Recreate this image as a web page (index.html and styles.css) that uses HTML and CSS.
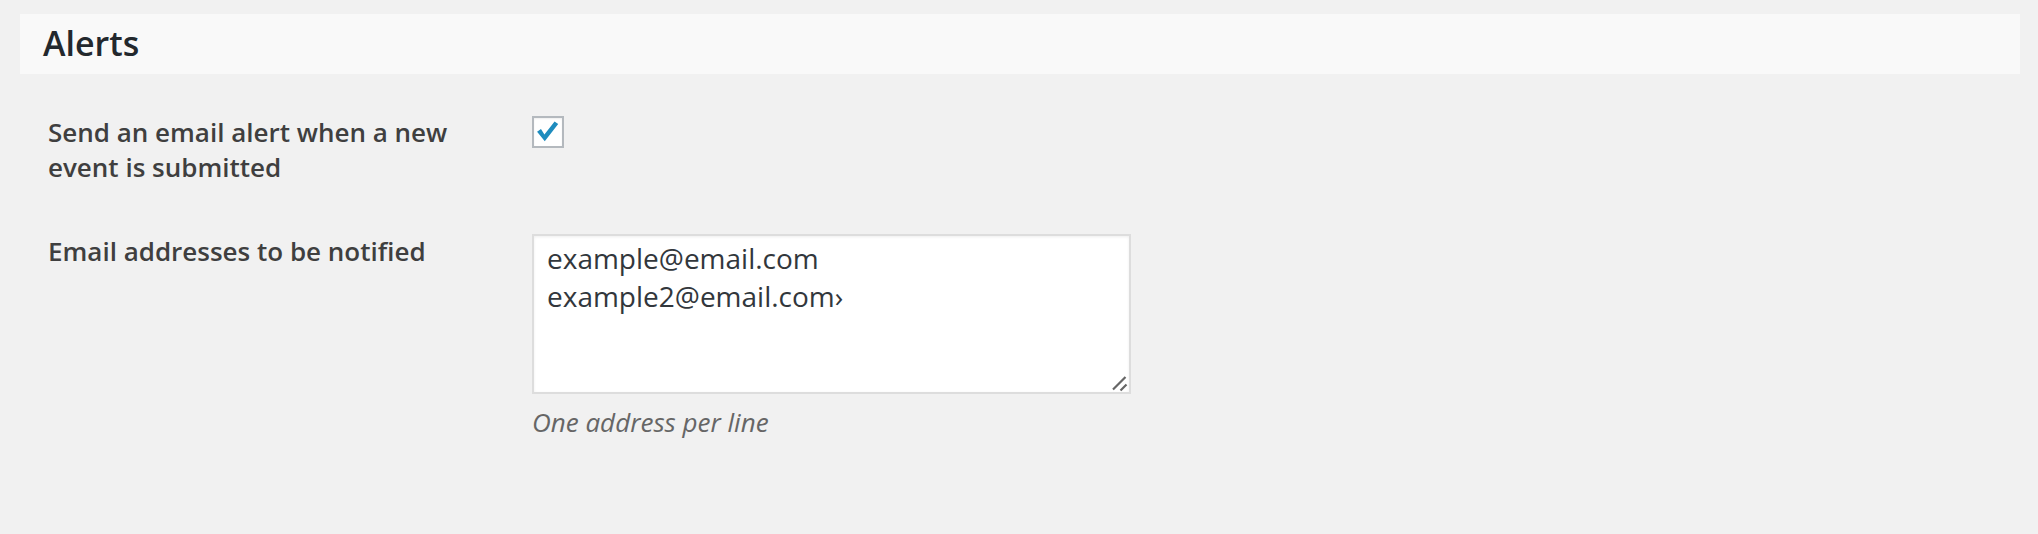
FILE: index.html
```html
<!DOCTYPE html>
<html lang="en">
<head>
<meta charset="utf-8">
<title>Alerts</title>
<link rel="stylesheet" href="styles.css">
</head>
<body>
<div class="panel-header">
  <h2 class="panel-title">Alerts</h2>
</div>
<div class="form-grid">
  <div class="field-label">Send an email alert when a new event is submitted</div>
  <div class="field-control">
    <label class="check">
      <input type="checkbox" class="check-input" checked>
      <svg class="check-mark" viewBox="0 0 32 32" width="29" height="29" aria-hidden="true">
        <path d="M4.5 15.2 L8.8 12.2 L12.6 18.2 L23.8 3.8 L27.8 6.6 L13 25.6 Z" fill="#1e8cbe"/>
      </svg>
    </label>
  </div>
  <div class="field-label">Email addresses to be notified</div>
  <div class="field-control">
    <div class="textarea-wrap">
      <textarea class="emails">example@email.com
example2@email.com›</textarea>
      <svg class="grip" viewBox="0 0 18 18" width="18" height="18" aria-hidden="true">
        <path d="M2 15.5 L14.5 3 M9.5 16.5 L15.5 10.5" stroke="#666" stroke-width="2.2" fill="none"/>
      </svg>
    </div>
    <p class="hint">One address per line</p>
  </div>
</div>
</body>
</html>
```

FILE: styles.css
```css
html, body {
  margin: 0;
  padding: 0;
}
body {
  background: #f1f1f1;
  font-family: "Open Sans", "Noto Sans", sans-serif;
  color: #444;
  width: 2038px;
  height: 534px;
  overflow: hidden;
}
.panel-header {
  margin: 14px 18px 0 20px;
  height: 60px;
  background: #f9f9f9;
  display: flex;
  align-items: center;
  padding-left: 23px;
}
.panel-title {
  margin: 0;
  font-size: 34px;
  font-weight: 600;
  line-height: 1;
  color: #23282d;
  position: relative;
  top: -1px;
}
.form-grid {
  display: grid;
  grid-template-columns: 483px 1fr;
  row-gap: 49px;
  padding-left: 48px;
  margin-top: 41px;
}
.field-label {
  font-size: 26px;
  font-weight: 600;
  line-height: 35px;
  color: #3f3f3f;
  width: 430px;
}
.field-control {
  display: flex;
  flex-direction: column;
  align-items: flex-start;
}
.check {
  position: relative;
  display: block;
  width: 32px;
  height: 32px;
  margin: 1px 0 0 1px;
}
.check-input {
  appearance: none;
  -webkit-appearance: none;
  margin: 0;
  width: 32px;
  height: 32px;
  box-sizing: border-box;
  border: 2px solid #b4b9be;
  background: #fff;
  box-shadow: inset 0 1px 2px rgba(0,0,0,0.07);
}
.check-mark {
  position: absolute;
  left: 1px;
  top: 2px;
  pointer-events: none;
}
.textarea-wrap {
  position: relative;
  margin-left: 1px;
}
.emails {
  display: block;
  box-sizing: border-box;
  width: 599px;
  height: 160px;
  margin: 0;
  border: 2px solid #ddd;
  background: #fff;
  box-shadow: inset 0 1px 3px rgba(0,0,0,0.07);
  padding: 3px 13px;
  font-family: "Open Sans", "Noto Sans", sans-serif;
  font-size: 28px;
  line-height: 38px;
  color: #32373c;
  resize: none;
  outline: none;
}
.grip {
  position: absolute;
  right: 2px;
  bottom: 2px;
  pointer-events: none;
}
.hint {
  margin: 11px 0 0 1px;
  font-size: 26px;
  line-height: 34px;
  font-style: italic;
  color: #666;
}
```
